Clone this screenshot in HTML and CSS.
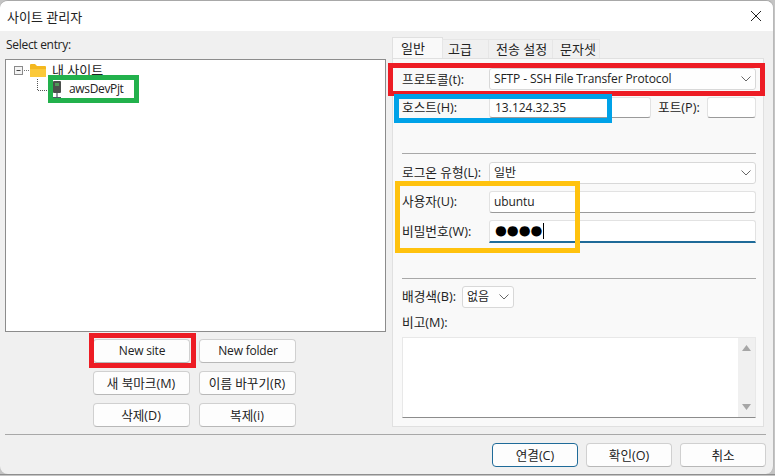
FILE: index.html
```html
<!DOCTYPE html>
<html lang="ko">
<head>
<meta charset="utf-8">
<title>사이트 관리자</title>
<link rel="stylesheet" href="styles.css">
</head>
<body>
<div class="window">
  <header class="titlebar">
    <span class="title">사이트 관리자</span>
    <svg class="close" width="12" height="12" viewBox="0 0 12 12"><path d="M1 1l10 10M11 1L1 11" stroke="#222" stroke-width="1" fill="none"/></svg>
  </header>
  <main class="content">
    <section class="left">
      <div class="entry-label">Select entry:</div>
      <div class="tree">
        <div class="tree-row root">
          <svg class="expander" width="24" height="14" viewBox="0 0 24 14"><rect x="0.5" y="2.5" width="8" height="8" fill="#f4f4f4" stroke="#8a8a8a"/><path d="M2.5 6.5h4" stroke="#444"/><path d="M10 6.5h6" stroke="#777" stroke-dasharray="1 1"/></svg>
          <svg class="folder" width="16" height="14" viewBox="0 0 16 14"><path d="M0 2a1 1 0 0 1 1-1h4l2 2h8a1 1 0 0 1 1 1v9a1 1 0 0 1-1 1H1a1 1 0 0 1-1-1z" fill="#f4b81f"/><path d="M0 6h16v7a1 1 0 0 1-1 1H1a1 1 0 0 1-1-1z" fill="#fbc93a"/></svg>
          <span class="tree-text">내 사이트</span>
        </div>
        <div class="tree-row child">
          <svg class="connector" width="16" height="18" viewBox="0 0 16 18"><path d="M0.5 0v11.5H16" stroke="#555" stroke-dasharray="1 1" fill="none"/></svg>
          <svg class="server" width="8" height="18" viewBox="0 0 8 18"><rect x="0" y="0" width="8" height="12" rx="1" fill="#4b4f4c"/><rect x="2" y="2" width="4" height="3" fill="#4f9a58"/><path d="M4 12v4M0 16.5h8" stroke="#4a5a66" stroke-width="1.2"/></svg>
          <span class="tree-text site">awsDevPjt</span>
        </div>
      </div>
      <div class="tree-buttons">
        <button class="btn latin">New site</button>
        <button class="btn latin">New folder</button>
        <button class="btn ko">새 북마크(M)</button>
        <button class="btn ko">이름 바꾸기(R)</button>
        <button class="btn ko">삭제(D)</button>
        <button class="btn ko">복제(i)</button>
      </div>
    </section>
    <section class="right">
      <nav class="tabs">
        <span class="tab active">일반</span>
        <span class="tab t2">고급</span>
        <span class="tab t3">전송 설정</span>
        <span class="tab t4">문자셋</span>
      </nav>
      <div class="panel">
        <div class="row protocol">
          <label class="lbl">프로토콜(t):</label>
          <div class="field select grow"><span class="value">SFTP - SSH File Transfer Protocol</span><svg class="chev" width="10" height="6" viewBox="0 0 10 6"><path d="M0.5 0.5L5 5l4.5-4.5" stroke="#666" fill="none"/></svg></div>
        </div>
        <div class="row host">
          <label class="lbl">호스트(H):</label>
          <div class="field input host-input">13.124.32.35</div>
          <label class="port-lbl">포트(P):</label>
          <div class="field input port-input"></div>
        </div>
        <hr class="sep sep1">
        <div class="row logon">
          <label class="lbl">로그온 유형(L):</label>
          <div class="field select grow"><span class="value">일반</span><svg class="chev" width="10" height="6" viewBox="0 0 10 6"><path d="M0.5 0.5L5 5l4.5-4.5" stroke="#666" fill="none"/></svg></div>
        </div>
        <div class="row user">
          <label class="lbl">사용자(U):</label>
          <div class="field input grow"><span class="value">ubuntu</span></div>
        </div>
        <div class="row pass">
          <label class="lbl">비밀번호(W):</label>
          <div class="field input focus grow"><span class="dots">●●●●</span><span class="caret"></span></div>
        </div>
        <hr class="sep sep2">
        <div class="row bg">
          <label class="bg-lbl">배경색(B):</label>
          <div class="field select bg-select"><span class="value">없음</span><svg class="chev" width="10" height="6" viewBox="0 0 10 6"><path d="M0.5 0.5L5 5l4.5-4.5" stroke="#666" fill="none"/></svg></div>
        </div>
        <div class="note-lbl">비고(M):</div>
        <div class="note">
          <div class="scroll">
            <svg width="9" height="6" viewBox="0 0 9 6"><path d="M4.5 0L9 6H0z" fill="#a6a6a6"/></svg>
            <svg width="9" height="6" viewBox="0 0 9 6"><path d="M4.5 6L9 0H0z" fill="#a6a6a6"/></svg>
          </div>
        </div>
      </div>
    </section>
  </main>
  <footer class="footer">
    <button class="btn big primary">연결(C)</button>
    <button class="btn big">확인(O)</button>
    <button class="btn big">취소</button>
  </footer>
  <div class="mark red mark-protocol"></div>
  <div class="mark blue mark-host"></div>
  <div class="mark yellow mark-cred"></div>
  <div class="mark green mark-site"></div>
  <div class="mark red mark-new"></div>
</div>
</body>
</html>
```
FILE: styles.css
```css
* { box-sizing: border-box; }
html, body { margin: 0; height: 100%; overflow: hidden; }
body {
  background: linear-gradient(#8e8e8e, #8e8e8e) 0 474px / 100% 1px no-repeat, #c4c4c4;
  font-family: "Open Sans", "Noto Sans CJK KR", sans-serif;
  font-size: 12px;
  color: #222;
}
.window {
  position: relative;
  width: 774px;
  height: 474px;
  background: #f0f0f0;
  border-radius: 8px;
  border-top: 1px solid #a8a8a8;
  border-right: 1px solid #b8b8b8;
  overflow: hidden;
  display: flex;
  flex-direction: column;
}
.titlebar {
  height: 30px;
  flex: none;
  background: #fff;
  display: flex;
  align-items: center;
  justify-content: space-between;
  padding: 0 11px 0 7px;
}
.title { font-size: 13px; }
.content { flex: none; height: 396px; display: flex; padding-left: 5px; }
.left { width: 381px; flex: none; }
.entry-label { height: 28px; padding: 5px 0 0 1px; line-height: 18px; letter-spacing: -0.3px; }
.tree {
  height: 273px;
  background: #fff;
  border: 1px solid #8c8c8c;
  padding: 2px 0 0 8px;
}
.tree-row { height: 18px; display: flex; align-items: center; }
.root { margin-top: -1px; margin-bottom: 1px; }
.expander { flex: none; margin-top: 2px; }
.folder { flex: none; margin-left: -8px; margin-right: 6px; }
.tree-text { line-height: 16px; }
.root .tree-text { font-size: 13px; }
.child { margin-left: 23px; }
.connector { flex: none; margin-top: -3px; }
.server { flex: none; margin: 2px 0 0 0; }
.site { margin-left: 8px; letter-spacing: -0.35px; }
.tree-buttons {
  display: grid;
  grid-template-columns: 97px 97px;
  grid-auto-rows: 24px;
  gap: 8px 9px;
  justify-content: center;
  margin-top: 7px;
  padding-right: 3px;
}
.btn {
  font: inherit;
  color: #222;
  background: #fdfdfd;
  border: 1px solid #d0d0d0;
  border-bottom-color: #b8b8b8;
  border-radius: 4px;
  padding: 0 0 2px;
}
.latin { letter-spacing: -0.2px; padding-left: 2px; }
.ko { font-size: 12.6px; }
.right { width: 372px; flex: none; margin-left: 6px; }
.tabs { height: 27px; display: flex; align-items: flex-end; padding-top: 6px; }
.tab {
  height: 19px;
  display: flex;
  align-items: center;
  font-size: 13px;
  padding-bottom: 2px;
  border: 1px solid #e6e6e6;
  border-bottom: none;
  margin-left: -1px;
  background: #f0f0f0;
}
.tab.active { height: 21px; width: 51px; margin-left: 0; padding-left: 8px; background: #f9f9f9; border-color: #e0e0e0; }
.t2 { width: 47px; padding-left: 5px; }
.t3 { width: 65px; padding-left: 7px; }
.t4 { width: 48px; padding-left: 7px; }
.panel {
  height: 369px;
  background: #f9f9f9;
  border: 1px solid #e0e0e0;
  padding: 9px 7px 0 9px;
}
.row { display: flex; align-items: center; }
.lbl { width: 87px; flex: none; font-size: 12.7px; padding-bottom: 2px; }
.logon .lbl, .user .lbl, .pass .lbl { padding-bottom: 3px; }
.grow { flex: 1; }
.field {
  background: #fff;
  border: 1px solid #e2e2e2;
  border-bottom-color: #9a9a9a;
  border-radius: 3px;
  padding-left: 4px;
  display: flex;
  align-items: center;
  height: 22px;
}
.select { background: #fefefe; border-color: #d8d8d8; justify-content: space-between; padding-right: 4px; }
.value { padding-bottom: 2px; letter-spacing: -0.1px; }
.protocol { height: 22px; }
.host { height: 21px; margin-top: 7px; }
.host-input { width: 162px; height: 21px; padding-left: 5px; }
.port-lbl { margin-left: 7px; width: 49px; flex: none; font-size: 12.7px; padding-bottom: 2px; }
.port-input { width: 49px; height: 21px; }
.sep { border: 0; height: 1px; background: #a8a8a8; margin: 0; }
.sep1 { margin-top: 35px; }
.logon { margin-top: 8px; }
.user { margin-top: 7px; }
.pass { margin-top: 7px; }
.focus { height: 23px; border-bottom: 2px solid #1f6b99; border-radius: 3px 3px 0 0; padding-left: 5px; }
.dots { font-size: 13.6px; line-height: 1; font-family: "DejaVu Sans", sans-serif; color: #000; }
.caret { width: 1px; height: 16px; background: #000; margin-left: 1px; }
.sep2 { margin-top: 35px; }
.bg { margin-top: 7px; }
.bg-lbl { width: 60px; flex: none; font-size: 12.7px; padding-bottom: 3px; }
.bg-select { width: 52px; }
.note-lbl { margin-top: 5px; height: 18px; line-height: 18px; font-size: 12.7px; }
.note {
  margin-top: 6px;
  height: 81px;
  background: #fff;
  border: 1px solid #e8e8e8;
  border-bottom-color: #8c8c8c;
  display: flex;
  justify-content: flex-end;
}
.scroll {
  width: 17px;
  background: #f0f0f0;
  display: flex;
  flex-direction: column;
  align-items: center;
  justify-content: space-between;
  padding: 7px 0;
}
.footer {
  flex: none;
  margin: 7px 7px 0 5px;
  border-top: 1px solid #a8a8a8;
  padding-top: 8px;
  display: flex;
  justify-content: flex-end;
  gap: 8px;
}
.big { width: 86px; height: 24px; font-size: 12.6px; }
.primary { border: 1px solid #1f6b99; }
.mark { position: absolute; border: 5px solid; pointer-events: none; }
.red { border-color: #ed1c24; }
.blue { border-color: #00a2e8; }
.yellow { border-color: #ffc20e; }
.green { border-color: #22b14c; }
.mark-protocol { left: 388px; top: 62px; width: 377px; height: 33px; }
.mark-host { left: 394px; top: 93px; width: 218px; height: 29px; }
.mark-cred { left: 395px; top: 180px; width: 185px; height: 72px; }
.mark-site { left: 48px; top: 74px; width: 91px; height: 28px; }
.mark-new { left: 89px; top: 332px; width: 107px; height: 35px; }
```
